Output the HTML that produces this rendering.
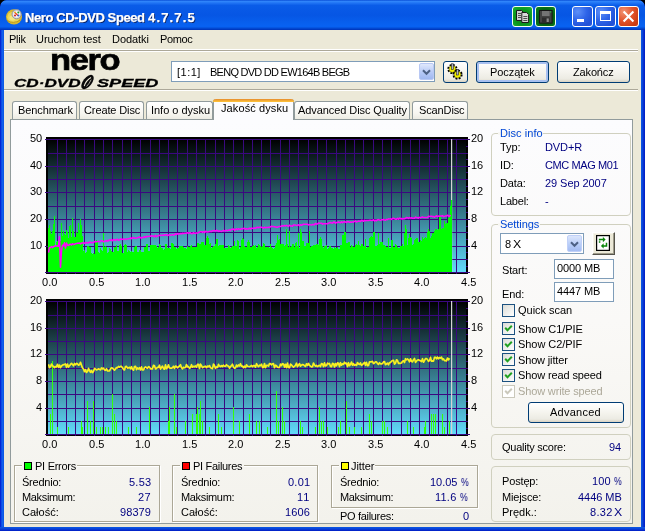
<!DOCTYPE html>
<html><head><meta charset="utf-8"><title>Nero CD-DVD Speed 4.7.7.5</title>
<style>
html,body{margin:0;padding:0;background:#000;}
body{width:645px;height:531px;position:relative;overflow:hidden;font-family:"Liberation Sans",sans-serif;font-size:11px;color:#000;}
.abs,.t,.gb,.btn,.cb,.inp,.tab{position:absolute;box-sizing:border-box;}
.t{white-space:nowrap;line-height:1.25;will-change:transform;}
#win{position:absolute;left:0;top:0;width:645px;height:531px;background:linear-gradient(90deg,#001acc 0,#0836dc 1px,#1464ee 2px,#0a56e2 4px,#0a56e2 641px,#0a50de 642px,#0838d4 643px,#001ac4 645px);border-radius:7px 7px 0 0;overflow:hidden;}
#title{position:absolute;left:0;top:0;width:645px;height:30px;border-radius:7px 7px 0 0;background:linear-gradient(180deg,#0a50d8 0%,#2f84fa 5%,#2074f4 10%,#0a5ce8 18%,#0656e4 50%,#0860ee 78%,#0862f2 88%,#0452dc 93%,#003cc4 97%,#0034b8 100%);}
#client{position:absolute;left:4px;top:30px;width:637px;height:497px;background:#ece9d8;}
.charts{position:absolute;left:0;top:0;}
.sep{position:absolute;left:4px;width:637px;height:2px;border-top:1px solid #aca899;border-bottom:1px solid #fff;box-sizing:border-box;}
#panel{position:absolute;left:10px;top:119px;width:623px;height:405px;border:1px solid #919b9c;background:linear-gradient(180deg,#fcfcfe 0%,#faf9f7 50%,#f3f2ec 100%);box-sizing:border-box;}
.tab{height:18px;top:101px;border:1px solid #919b9c;border-bottom:none;border-radius:3px 3px 0 0;background:linear-gradient(180deg,#ffffff 0%,#f6f5ef 70%,#ecebe2 100%);}
.tab.sel{top:99px;height:21px;background:#fcfcfe;border-top:none;z-index:3;}
.tab.sel:before{content:"";position:absolute;left:-1px;right:-1px;top:0;height:3px;background:linear-gradient(180deg,#e68b2c,#ffc73c);border-radius:3px 3px 0 0;}
.gb{border:1px solid #d0d0bf;border-radius:4px;}
.gl{position:absolute;top:-8px;left:7px;padding:0 2px;background:#f8f8f5;color:#0046d5;white-space:nowrap;line-height:14px;}
.btn{border:1px solid #003c74;border-radius:3px;background:linear-gradient(180deg,#ffffff 0%,#f5f4ee 50%,#ecebe3 85%,#d8d2c2 100%);text-align:center;}
.inp{border:1px solid #7f9db9;background:#fff;}
.cb{width:13px;height:13px;border:1px solid #1c5180;background:linear-gradient(135deg,#dcdcd6,#fff);}
.cb svg{position:absolute;left:1px;top:1px;}
</style></head><body>
<div id="win">
<div id="title"></div>
<div id="client"></div><div class="abs" style="left:0;top:527px;width:645px;height:4px;background:linear-gradient(180deg,#0a56e2 0,#0a50de 1px,#0838d4 2.5px,#001ac4 4px);"></div>
<!-- title bar -->
<svg class="abs" style="left:5px;top:7px" width="19" height="19" viewBox="0 0 19 19"><ellipse cx="9" cy="9.8" rx="8" ry="7.6" fill="#d9b92c"/><ellipse cx="8.5" cy="10.2" rx="6.2" ry="5.6" fill="#ead658"/><ellipse cx="7.5" cy="11" rx="3" ry="2.4" fill="#f2e684"/><path d="M2 13.5Q8 17.5 15.5 13" stroke="#b8961c" stroke-width="1" fill="none"/><circle cx="11.6" cy="7.2" r="4.6" fill="#d6d8de" stroke="#8c8f9c" stroke-width="0.9"/><circle cx="11.6" cy="7.2" r="3.3" fill="#f4f6fa"/><path d="M9.6 5.2L13 8.6" stroke="#e83a18" stroke-width="1.3"/><circle cx="10" cy="8.6" r="1" fill="#d01818"/><circle cx="13.3" cy="5.6" r="1" fill="#18a038"/><circle cx="13.4" cy="8.6" r="1" fill="#2860d8"/><circle cx="10" cy="5.4" r="0.8" fill="#e8b818"/></svg>
<!-- title buttons -->
<div class="abs" style="left:512px;top:6px;width:21px;height:21px;border:1px solid #fff;border-radius:3px;background:radial-gradient(circle at 50% 55%,#0a8218 0%,#0c961e 55%,#1cb432 100%);border-color:#f4fff4;"></div>
<svg class="abs" style="left:515px;top:9px" width="15" height="15" viewBox="0 0 15 15"><path d="M1.5 1.5h5l2 2v8h-7z" fill="#cfcfcf" stroke="#1c1c1c" stroke-width="1"/><path d="M3 4.5h3M3 6.5h3M3 8.5h3" stroke="#505050" stroke-width="1"/><path d="M6.8 3.5h4.8l2 2v8h-6.8z" fill="#d8d8d8" stroke="#1c1c1c" stroke-width="1"/><path d="M8.3 7.5h4M8.3 9.5h4M8.3 11.5h4" stroke="#505050" stroke-width="1"/></svg>
<div class="abs" style="left:535px;top:6px;width:21px;height:21px;border:1px solid #fff;border-radius:3px;background:radial-gradient(circle at 50% 55%,#044c0c 0%,#066012 55%,#0c8c1e 100%);border-color:#f0fff0;"></div>
<svg class="abs" style="left:539px;top:9.5px" width="14" height="14" viewBox="0 0 14 14"><rect x="0.5" y="0.5" width="12.6" height="12.6" fill="#424242" stroke="#161616"/><rect x="3" y="1" width="7.6" height="5" fill="#747474"/><rect x="3" y="7.6" width="7.6" height="5" fill="#2c2c2c"/><rect x="7.6" y="8.4" width="2.2" height="3.6" fill="#8a8a8a"/><rect x="11" y="1.3" width="1.2" height="1.2" fill="#30c040"/></svg>
<div class="abs" style="left:572px;top:6px;width:21px;height:21px;border:1px solid #fff;border-radius:3px;background:radial-gradient(circle at 25% 25%,#5e90f8 0%,#2e64e8 45%,#2050d6 80%,#2a5ce4 100%);"></div>
<div class="abs" style="left:577px;top:19px;width:7px;height:3px;background:#fff;"></div>
<div class="abs" style="left:595px;top:6px;width:21px;height:21px;border:1px solid #fff;border-radius:3px;background:radial-gradient(circle at 25% 25%,#5e90f8 0%,#2e64e8 45%,#2050d6 80%,#2a5ce4 100%);"></div>
<div class="abs" style="left:600px;top:11px;width:11px;height:10px;border:1px solid #fff;border-top:3px solid #fff;"></div>
<div class="abs" style="left:618px;top:6px;width:21px;height:21px;border:1px solid #fff;border-radius:3px;background:radial-gradient(circle at 25% 25%,#f29474 0%,#e2542c 45%,#c83a10 85%,#d2441a 100%);"></div>
<svg class="abs" style="left:622px;top:10px" width="13" height="13" viewBox="0 0 13 13"><path d="M1.6 1.6L11.4 11.4M11.4 1.6L1.6 11.4" stroke="#fff" stroke-width="2.1"/></svg>
<!-- menu -->




<div class="sep" style="top:50px;width:634px"></div><div class="abs" style="left:4px;top:49px;width:634px;height:1px;background:#fff"></div>
<!-- logo -->
<!-- drive combo -->
<div class="inp" style="left:171px;top:61px;width:264px;height:21px;"></div>
<div class="abs" style="left:418.5px;top:63px;width:15px;height:17px;border-radius:2px;background:linear-gradient(180deg,#e0e8fc,#b4c8f6 60%,#a0b8f0);border:1px solid #b8c8f4;"></div>
<svg class="abs" style="left:421.5px;top:68.5px" width="9" height="7" viewBox="0 0 9 7"><path d="M1 1.2L4.5 4.8L8 1.2" stroke="#4d6185" stroke-width="2" fill="none"/></svg>
<!-- icon button -->
<div class="btn" style="left:443px;top:61px;width:25px;height:22px;"></div>
<svg class="abs" style="left:445px;top:61.6px" width="20" height="20" viewBox="0 0 20 20"><g id="gear"><circle cx="7.4" cy="7" r="3.9" fill="none" stroke="#000" stroke-width="2.4" stroke-dasharray="1.75 1.31"/><circle cx="7.4" cy="7" r="3.4" fill="#f2ee00"/><circle cx="7.4" cy="7" r="3.5" fill="none" stroke="#000" stroke-width="0.6" opacity="0.6"/><rect x="6.5" y="1.8" width="1.9" height="5.6" fill="#aeb2c6" stroke="#222" stroke-width="0.6"/></g><g transform="translate(5.1 5.6)"><circle cx="7.4" cy="7" r="3.9" fill="none" stroke="#000" stroke-width="2.4" stroke-dasharray="1.75 1.31"/><circle cx="7.4" cy="7" r="3.4" fill="#f2ee00"/><circle cx="7.4" cy="7" r="3.5" fill="none" stroke="#000" stroke-width="0.6" opacity="0.6"/><rect x="6.5" y="1.8" width="1.9" height="5.6" fill="#aeb2c6" stroke="#222" stroke-width="0.6"/></g></svg>
<div class="btn" style="left:476px;top:61px;width:73px;height:22px;box-shadow:inset 0 0 0 2px #a8c0f0;"></div>

<div class="btn" style="left:557px;top:61px;width:73px;height:22px;"></div>

<div class="sep" style="top:89px;width:634px"></div>
<!-- tabs -->
<div id="panel"></div>
<div class="tab" style="left:12px;width:65px;"></div>
<div class="tab" style="left:79px;width:65px;"></div>
<div class="tab" style="left:146px;width:67px;"></div>
<div class="tab sel" style="left:213px;width:81px;"></div>
<div class="tab" style="left:294px;width:116px;"></div>
<div class="tab" style="left:412px;width:56px;"></div>
<div class="t" style="left:24.77px;top:10px;font-size:13px;color:#fff;letter-spacing:-0.399px;font-weight:bold;text-shadow:1px 1px 0 #0a246a;-webkit-text-stroke:0.25px #fff;">Nero CD-DVD Speed</div>
<div class="t" style="left:147.97px;top:10px;font-size:13px;color:#fff;letter-spacing:1.166px;font-weight:bold;text-shadow:1px 1px 0 #0a246a;-webkit-text-stroke:0.25px #fff;">4.7.7.5</div>
<div class="t" style="left:8.70px;top:33px;font-size:11px;color:#000;letter-spacing:-0.231px;">Plik</div>
<div class="t" style="left:36.00px;top:33px;font-size:11px;color:#000;letter-spacing:-0.059px;">Uruchom test</div>
<div class="t" style="left:112.20px;top:33px;font-size:11px;color:#000;letter-spacing:-0.056px;">Dodatki</div>
<div class="t" style="left:159.60px;top:33px;font-size:11px;color:#000;letter-spacing:-0.367px;">Pomoc</div>
<div class="t" style="left:177.20px;top:66px;font-size:11px;color:#000;letter-spacing:0.499px;">[1:1]</div>
<div class="t" style="left:210.20px;top:66px;font-size:11px;color:#000;letter-spacing:-0.743px;">BENQ DVD DD EW164B BEGB</div>
<div class="t" style="left:489.70px;top:66px;font-size:11px;color:#000;letter-spacing:-0.068px;">Początek</div>
<div class="t" style="left:572.70px;top:66px;font-size:11px;color:#000;letter-spacing:-0.153px;">Zakończ</div>
<div class="t" style="left:17.60px;top:104px;font-size:11px;color:#000;letter-spacing:-0.092px;">Benchmark</div>
<div class="t" style="left:83.60px;top:104px;font-size:11px;color:#000;letter-spacing:-0.114px;">Create Disc</div>
<div class="t" style="left:150.80px;top:104px;font-size:11px;color:#000;letter-spacing:-0.026px;">Info o dysku</div>
<div class="t" style="left:220.50px;top:102px;font-size:11px;color:#000;letter-spacing:0.098px;z-index:4;">Jakość dysku</div>
<div class="t" style="left:298.20px;top:104px;font-size:11px;color:#000;letter-spacing:-0.079px;">Advanced Disc Quality</div>
<div class="t" style="left:418.70px;top:104px;font-size:11px;color:#000;letter-spacing:-0.120px;">ScanDisc</div>
<div class="t" style="left:49.6px;top:44.8px;font-size:29.5px;line-height:1;font-weight:bold;-webkit-text-stroke:0.7px #000;letter-spacing:-1.2px;transform-origin:0 0;transform:scaleX(1.169);">nero</div>
<div class="t" style="left:13.9px;top:77.6px;font-size:11.2px;line-height:1;font-weight:bold;font-style:italic;-webkit-text-stroke:0.3px #000;letter-spacing:0.0px;transform-origin:0 0;transform:scaleX(1.529);">CD·DVD</div>
<div class="t" style="left:97.4px;top:77.6px;font-size:11.2px;line-height:1;font-weight:bold;font-style:italic;-webkit-text-stroke:0.3px #000;letter-spacing:0.0px;transform-origin:0 0;transform:scaleX(1.617);">SPEED</div>
<svg class="abs" style="left:79px;top:74px" width="17" height="16" viewBox="0 0 17 16"><ellipse cx="8.5" cy="8" rx="4.3" ry="8.4" transform="rotate(38 8.5 8)" fill="#0a0a0a"/><path d="M5.2 12.2Q7 6.5 12 3.6" stroke="#ece9d8" stroke-width="1.1" fill="none"/><path d="M7.6 12.4Q10.5 9.5 12.2 5.6" stroke="#ece9d8" stroke-width="0.7" fill="none"/></svg>
<svg class="charts" width="645" height="531" viewBox="0 0 645 531" shape-rendering="crispEdges">
<defs><linearGradient id="bg" x1="0" y1="0" x2="0" y2="1"><stop offset="0" stop-color="#000000"/><stop offset="1" stop-color="#62dcfc"/></linearGradient></defs>
<rect x="48" y="139" width="418" height="134" fill="url(#bg)"/>
<rect x="57" y="139" width="1" height="134" fill="#3a0880"/><rect x="66" y="139" width="1" height="134" fill="#3a0880"/><rect x="75" y="139" width="1" height="134" fill="#3a0880"/><rect x="84" y="139" width="1" height="134" fill="#3a0880"/><rect x="94" y="139" width="1" height="134" fill="#3a0880"/><rect x="103" y="139" width="1" height="134" fill="#3a0880"/><rect x="112" y="139" width="1" height="134" fill="#3a0880"/><rect x="122" y="139" width="1" height="134" fill="#3a0880"/><rect x="131" y="139" width="1" height="134" fill="#3a0880"/><rect x="140" y="139" width="1" height="134" fill="#3a0880"/><rect x="150" y="139" width="1" height="134" fill="#3a0880"/><rect x="159" y="139" width="1" height="134" fill="#3a0880"/><rect x="168" y="139" width="1" height="134" fill="#3a0880"/><rect x="177" y="139" width="1" height="134" fill="#3a0880"/><rect x="187" y="139" width="1" height="134" fill="#3a0880"/><rect x="196" y="139" width="1" height="134" fill="#3a0880"/><rect x="205" y="139" width="1" height="134" fill="#3a0880"/><rect x="215" y="139" width="1" height="134" fill="#3a0880"/><rect x="224" y="139" width="1" height="134" fill="#3a0880"/><rect x="233" y="139" width="1" height="134" fill="#3a0880"/><rect x="243" y="139" width="1" height="134" fill="#3a0880"/><rect x="252" y="139" width="1" height="134" fill="#3a0880"/><rect x="261" y="139" width="1" height="134" fill="#3a0880"/><rect x="270" y="139" width="1" height="134" fill="#3a0880"/><rect x="280" y="139" width="1" height="134" fill="#3a0880"/><rect x="289" y="139" width="1" height="134" fill="#3a0880"/><rect x="298" y="139" width="1" height="134" fill="#3a0880"/><rect x="308" y="139" width="1" height="134" fill="#3a0880"/><rect x="317" y="139" width="1" height="134" fill="#3a0880"/><rect x="326" y="139" width="1" height="134" fill="#3a0880"/><rect x="336" y="139" width="1" height="134" fill="#3a0880"/><rect x="345" y="139" width="1" height="134" fill="#3a0880"/><rect x="354" y="139" width="1" height="134" fill="#3a0880"/><rect x="363" y="139" width="1" height="134" fill="#3a0880"/><rect x="373" y="139" width="1" height="134" fill="#3a0880"/><rect x="382" y="139" width="1" height="134" fill="#3a0880"/><rect x="391" y="139" width="1" height="134" fill="#3a0880"/><rect x="401" y="139" width="1" height="134" fill="#3a0880"/><rect x="410" y="139" width="1" height="134" fill="#3a0880"/><rect x="419" y="139" width="1" height="134" fill="#3a0880"/><rect x="429" y="139" width="1" height="134" fill="#3a0880"/><rect x="438" y="139" width="1" height="134" fill="#3a0880"/><rect x="447" y="139" width="1" height="134" fill="#3a0880"/><rect x="456" y="139" width="1" height="134" fill="#3a0880"/><rect x="48" y="139" width="418" height="1" fill="#3a0880"/><rect x="48" y="153" width="418" height="1" fill="#3a0880"/><rect x="48" y="166" width="418" height="1" fill="#3a0880"/><rect x="48" y="179" width="418" height="1" fill="#3a0880"/><rect x="48" y="192" width="418" height="1" fill="#3a0880"/><rect x="48" y="206" width="418" height="1" fill="#3a0880"/><rect x="48" y="219" width="418" height="1" fill="#3a0880"/><rect x="48" y="232" width="418" height="1" fill="#3a0880"/><rect x="48" y="246" width="418" height="1" fill="#3a0880"/><rect x="48" y="259" width="418" height="1" fill="#3a0880"/><rect x="48" y="272" width="418" height="1" fill="#3a0880"/>
<rect x="451" y="139" width="1" height="133" fill="#d4d4d4"/><rect x="452" y="139" width="1" height="133" fill="#dcdcdc" opacity="0.2"/>
<path d="M48 272V227.9h1V224.6h1V230.7h1V234.4h1V231.1h1V224.2h1V215.9h1V245.9h1V241.7h1V241.0h1V240.9h1V243.8h1V240.9h1V222.6h1V236.4h1V231.2h1V234.4h1V234.8h1V229.6h1V232.1h1V237.5h1V225.8h1V225.4h1V236.6h1V218.4h1V230.7h1V236.6h1V237.2h1V231.5h1V232.7h1V223.4h1V230.4h1V219.4h1V225.3h1V235.7h1V250.6h1V250.4h1V252.5h1V252.0h1V246.1h1V246.4h1V247.1h1V246.6h1V253.4h1V253.9h1V253.2h1V254.0h1V241.0h1V239.7h1V240.9h1V252.4h1V252.8h1V247.6h1V250.1h1V251.0h1V232.6h1V246.7h1V245.8h1V247.3h1V252.7h1V251.8h1V248.1h1V248.9h1V251.4h1V251.6h1V252.1h1V247.1h1V246.6h1V244.5h1V250.5h1V251.0h1V244.9h1V244.3h1V245.6h1V252.9h1V253.0h1V245.1h1V243.9h1V245.1h1V251.8h1V249.8h1V251.1h1V251.5h1V251.3h1V252.1h1V252.1h1V247.2h1V246.1h1V246.3h1V251.9h1V251.9h1V249.6h1V249.5h1V252.2h1V251.9h1V252.2h1V246.6h1V247.4h1V243.6h1V243.7h1V251.1h1V251.3h1V244.8h1V244.7h1V244.6h1V245.3h1V245.1h1V245.4h1V245.7h1V247.7h1V247.4h1V244.4h1V244.6h1V248.0h1V248.1h1V249.6h1V249.1h1V244.1h1V243.8h1V248.1h1V247.7h1V248.2h1V248.9h1V243.4h1V242.8h1V243.7h1V246.6h1V246.5h1V248.6h1V248.2h1V248.0h1V245.7h1V246.0h1V246.4h1V245.8h1V246.8h1V247.7h1V248.4h1V248.5h1V246.0h1V247.3h1V246.7h1V245.7h1V245.3h1V246.8h1V247.1h1V247.2h1V247.1h1V247.3h1V243.3h1V243.3h1V243.5h1V243.8h1V242.2h1V241.9h1V241.8h1V244.8h1V245.4h1V237.7h1V235.9h1V237.6h1V243.6h1V243.1h1V247.6h1V246.5h1V245.5h1V245.9h1V244.3h1V239.2h1V238.7h1V245.6h1V245.0h1V244.6h1V244.8h1V244.8h1V245.1h1V247.9h1V247.5h1V247.7h1V248.2h1V245.3h1V245.9h1V248.4h1V246.8h1V245.9h1V245.8h1V240.8h1V245.8h1V245.8h1V239.7h1V240.5h1V248.7h1V246.6h1V239.6h1V237.8h1V238.8h1V246.3h1V246.6h1V247.1h1V241.9h1V240.1h1V242.1h1V246.7h1V246.6h1V246.4h1V245.2h1V245.8h1V244.9h1V247.5h1V247.2h1V244.0h1V244.7h1V246.2h1V246.6h1V246.1h1V243.4h1V244.0h1V246.9h1V247.2h1V246.7h1V247.4h1V248.3h1V244.4h1V247.1h1V247.9h1V248.6h1V247.6h1V244.8h1V242.8h1V234.7h1V239.6h1V238.9h1V244.0h1V243.8h1V244.3h1V243.9h1V246.4h1V245.4h1V229.4h1V244.1h1V247.1h1V230.8h1V247.4h1V245.7h1V243.8h1V243.8h1V246.8h1V242.9h1V242.4h1V246.1h1V233.4h1V248.1h1V228.6h1V231.9h1V240.7h1V240.8h1V245.9h1V246.3h1V243.0h1V242.5h1V243.0h1V230.9h1V246.6h1V246.3h1V246.0h1V245.4h1V245.1h1V245.4h1V243.6h1V243.9h1V245.4h1V239.2h1V236.8h1V238.6h1V246.4h1V247.5h1V245.7h1V245.8h1V245.1h1V248.5h1V247.9h1V245.7h1V245.5h1V248.3h1V248.0h1V248.6h1V247.2h1V248.1h1V248.2h1V247.3h1V248.6h1V248.8h1V245.3h1V244.8h1V235.1h1V235.1h1V232.2h1V231.6h1V243.2h1V242.5h1V242.4h1V241.8h1V247.0h1V245.0h1V246.1h1V247.4h1V246.6h1V244.9h1V244.2h1V244.8h1V240.8h1V245.3h1V246.1h1V244.1h1V244.4h1V246.1h1V245.5h1V238.9h1V247.5h1V247.0h1V247.2h1V238.4h1V237.3h1V235.5h1V236.5h1V232.0h1V231.5h1V245.8h1V245.5h1V245.1h1V233.0h1V244.1h1V242.3h1V242.2h1V242.3h1V245.1h1V245.3h1V246.4h1V246.5h1V246.9h1V237.5h1V248.1h1V248.3h1V239.7h1V239.6h1V246.8h1V247.0h1V244.0h1V244.5h1V247.0h1V247.8h1V248.0h1V246.1h1V245.8h1V243.6h1V246.2h1V233.4h1V225.4h1V229.4h1V245.4h1V238.3h1V234.2h1V237.4h1V237.5h1V244.9h1V244.2h1V240.0h1V239.4h1V237.9h1V238.4h1V242.4h1V241.9h1V240.3h1V240.5h1V236.5h1V238.5h1V238.2h1V236.9h1V238.0h1V231.5h1V229.2h1V230.6h1V237.7h1V236.1h1V233.2h1V233.0h1V230.6h1V229.1h1V229.1h1V229.9h1V229.4h1V216.9h1V217.4h1V229.0h1V228.2h1V228.1h1V220.6h1V224.2h1V223.3h1V222.9h1V217.5h1V216.1h1V205.5h1V200.2h1V272Z" fill="#00ff00"/>
<g shape-rendering="auto"><polyline points="48.5,252.7 49.5,247.7 50.5,247.5 51.5,246.5 52.5,247.6 53.5,246.7 54.5,246.3 55.5,245.8 56.5,245.9 57.5,245.9 58.5,246.2 59.5,236.8 60.5,267.3 61.5,250.7 62.5,245.2 63.5,245.9 64.5,242.8 65.5,247.9 66.5,243.1 67.5,245.3 68.5,245.4 69.5,244.5 70.5,244.2 71.5,245.0 72.5,243.7 73.5,244.5 74.5,244.3 75.5,243.7 76.5,243.6 77.5,243.2 78.5,243.2 79.5,243.0 80.5,243.9 81.5,243.1 82.5,243.0 83.5,242.7 84.5,243.4 85.5,242.9 86.5,242.6 87.5,242.7 88.5,242.9 89.5,242.1 90.5,242.2 91.5,242.9 92.5,242.4 93.5,242.6 94.5,241.5 95.5,241.8 96.5,241.7 97.5,241.6 98.5,241.4 99.5,241.4 100.5,241.5 101.5,240.7 102.5,240.7 103.5,241.7 104.5,241.5 105.5,240.9 106.5,240.5 107.5,241.3 108.5,240.4 109.5,240.1 110.5,240.3 111.5,239.6 112.5,240.8 113.5,239.8 114.5,239.6 115.5,240.4 116.5,239.5 117.5,239.2 118.5,240.2 119.5,240.0 120.5,238.8 121.5,239.4 122.5,239.2 123.5,239.0 124.5,239.3 125.5,239.5 126.5,238.9 127.5,239.0 128.5,238.8 129.5,238.5 130.5,238.0 131.5,238.6 132.5,237.7 133.5,237.5 134.5,238.2 135.5,238.2 136.5,238.2 137.5,237.6 138.5,237.5 139.5,237.0 140.5,237.7 141.5,238.1 142.5,237.5 143.5,237.4 144.5,236.7 145.5,237.4 146.5,236.4 147.5,236.5 148.5,236.5 149.5,236.3 150.5,236.3 151.5,235.8 152.5,235.9 153.5,236.3 154.5,236.8 155.5,235.4 156.5,236.7 157.5,236.1 158.5,235.6 159.5,235.3 160.5,235.4 161.5,235.2 162.5,235.2 163.5,235.4 164.5,234.7 165.5,235.1 166.5,234.5 167.5,235.6 168.5,235.2 169.5,234.5 170.5,235.3 171.5,235.1 172.5,234.6 173.5,235.2 174.5,234.7 175.5,233.8 176.5,234.5 177.5,233.7 178.5,234.1 179.5,233.9 180.5,233.5 181.5,233.7 182.5,233.3 183.5,233.4 184.5,233.2 185.5,233.3 186.5,233.1 187.5,232.8 188.5,233.3 189.5,232.7 190.5,232.8 191.5,233.7 192.5,233.4 193.5,232.6 194.5,233.3 195.5,233.2 196.5,232.9 197.5,232.9 198.5,232.7 199.5,232.0 200.5,231.8 201.5,231.7 202.5,232.5 203.5,231.7 204.5,232.4 205.5,231.2 206.5,231.7 207.5,232.0 208.5,231.8 209.5,231.5 210.5,231.3 211.5,231.5 212.5,230.8 213.5,230.6 214.5,230.7 215.5,231.1 216.5,230.3 217.5,230.7 218.5,231.4 219.5,231.0 220.5,231.3 221.5,231.4 222.5,230.9 223.5,230.3 224.5,231.0 225.5,230.7 226.5,230.2 227.5,230.8 228.5,230.2 229.5,229.9 230.5,230.6 231.5,229.2 232.5,229.3 233.5,229.0 234.5,230.4 235.5,229.6 236.5,228.8 237.5,229.6 238.5,228.8 239.5,229.2 240.5,229.6 241.5,228.5 242.5,228.9 243.5,228.5 244.5,228.3 245.5,229.2 246.5,228.7 247.5,229.0 248.5,229.0 249.5,228.2 250.5,229.1 251.5,228.0 252.5,228.3 253.5,228.5 254.5,228.0 255.5,228.4 256.5,227.5 257.5,227.3 258.5,227.8 259.5,227.3 260.5,227.2 261.5,227.2 262.5,227.6 263.5,228.1 264.5,227.3 265.5,227.8 266.5,227.5 267.5,227.5 268.5,227.3 269.5,227.5 270.5,226.7 271.5,226.3 272.5,226.4 273.5,226.5 274.5,226.7 275.5,226.9 276.5,227.3 277.5,227.2 278.5,226.8 279.5,226.6 280.5,226.5 281.5,226.1 282.5,225.8 283.5,225.9 284.5,225.6 285.5,225.9 286.5,225.4 287.5,225.9 288.5,226.4 289.5,225.1 290.5,226.0 291.5,226.0 292.5,226.2 293.5,224.9 294.5,225.0 295.5,225.1 296.5,225.6 297.5,225.2 298.5,224.7 299.5,225.7 300.5,224.7 301.5,225.3 302.5,224.8 303.5,224.3 304.5,224.2 305.5,224.3 306.5,224.3 307.5,224.2 308.5,225.0 309.5,224.6 310.5,224.8 311.5,224.9 312.5,224.6 313.5,224.6 314.5,224.7 315.5,223.3 316.5,224.1 317.5,224.0 318.5,223.1 319.5,223.3 320.5,223.3 321.5,223.2 322.5,224.1 323.5,223.8 324.5,223.8 325.5,223.7 326.5,223.7 327.5,223.7 328.5,223.3 329.5,222.8 330.5,222.6 331.5,222.9 332.5,223.1 333.5,222.1 334.5,222.1 335.5,223.2 336.5,222.5 337.5,222.5 338.5,221.9 339.5,222.6 340.5,222.8 341.5,221.8 342.5,222.7 343.5,221.9 344.5,221.7 345.5,222.0 346.5,222.5 347.5,221.5 348.5,221.7 349.5,222.2 350.5,221.9 351.5,222.3 352.5,221.9 353.5,222.1 354.5,221.2 355.5,221.1 356.5,221.9 357.5,221.6 358.5,221.1 359.5,221.2 360.5,221.4 361.5,220.3 362.5,220.6 363.5,221.3 364.5,220.3 365.5,220.7 366.5,220.6 367.5,220.5 368.5,220.4 369.5,220.3 370.5,220.2 371.5,220.4 372.5,220.2 373.5,219.9 374.5,220.9 375.5,220.3 376.5,220.7 377.5,219.8 378.5,219.6 379.5,220.0 380.5,220.4 381.5,219.8 382.5,219.7 383.5,219.4 384.5,220.1 385.5,220.2 386.5,219.4 387.5,219.6 388.5,218.9 389.5,219.1 390.5,218.9 391.5,219.4 392.5,218.6 393.5,218.3 394.5,218.7 395.5,219.3 396.5,219.2 397.5,218.3 398.5,219.1 399.5,218.1 400.5,218.8 401.5,218.5 402.5,219.0 403.5,218.7 404.5,218.7 405.5,218.3 406.5,217.6 407.5,217.7 408.5,218.4 409.5,217.6 410.5,218.1 411.5,217.7 412.5,218.2 413.5,218.3 414.5,218.2 415.5,217.1 416.5,217.5 417.5,217.7 418.5,218.2 419.5,217.4 420.5,217.9 421.5,217.3 422.5,217.0 423.5,217.4 424.5,217.5 425.5,217.6 426.5,217.5 427.5,217.6 428.5,216.2 429.5,216.4 430.5,216.3 431.5,216.3 432.5,216.6 433.5,216.6 434.5,217.2 435.5,216.4 436.5,215.8 437.5,216.6 438.5,216.1 439.5,216.2 440.5,216.1 441.5,215.9 442.5,215.7 443.5,216.6 444.5,216.4 445.5,216.0 446.5,216.0 447.5,215.2 448.5,216.1 449.5,216.4 450.5,215.0" fill="none" stroke="#ff04fa" stroke-width="1.55" stroke-linejoin="round"/></g>
<rect x="46" y="137" width="2" height="137" fill="#000"/><rect x="466" y="137" width="2" height="137" fill="#000"/><rect x="47" y="137" width="420" height="2" fill="#000"/><rect x="46" y="273" width="422" height="1" fill="#000"/><rect x="466" y="139" width="4" height="1" fill="#3a0880"/><rect x="466" y="146" width="2" height="1" fill="#3a0880"/><rect x="466" y="153" width="2" height="1" fill="#3a0880"/><rect x="466" y="159" width="2" height="1" fill="#3a0880"/><rect x="466" y="166" width="4" height="1" fill="#3a0880"/><rect x="466" y="172" width="2" height="1" fill="#3a0880"/><rect x="466" y="179" width="2" height="1" fill="#3a0880"/><rect x="466" y="186" width="2" height="1" fill="#3a0880"/><rect x="466" y="192" width="4" height="1" fill="#3a0880"/><rect x="466" y="199" width="2" height="1" fill="#3a0880"/><rect x="466" y="206" width="2" height="1" fill="#3a0880"/><rect x="466" y="212" width="2" height="1" fill="#3a0880"/><rect x="466" y="219" width="4" height="1" fill="#3a0880"/><rect x="466" y="226" width="2" height="1" fill="#3a0880"/><rect x="466" y="232" width="2" height="1" fill="#3a0880"/><rect x="466" y="239" width="2" height="1" fill="#3a0880"/><rect x="466" y="246" width="4" height="1" fill="#3a0880"/><rect x="466" y="252" width="2" height="1" fill="#3a0880"/><rect x="466" y="259" width="2" height="1" fill="#3a0880"/><rect x="466" y="266" width="2" height="1" fill="#3a0880"/><rect x="466" y="272" width="4" height="1" fill="#3a0880"/><rect x="45" y="139" width="3" height="1" fill="#3a0880"/><rect x="45" y="166" width="3" height="1" fill="#3a0880"/><rect x="45" y="192" width="3" height="1" fill="#3a0880"/><rect x="45" y="219" width="3" height="1" fill="#3a0880"/><rect x="45" y="246" width="3" height="1" fill="#3a0880"/><rect x="45" y="272" width="3" height="1" fill="#3a0880"/><rect x="57" y="273" width="1" height="1" fill="#3a0880"/><rect x="66" y="273" width="1" height="1" fill="#3a0880"/><rect x="75" y="273" width="1" height="1" fill="#3a0880"/><rect x="84" y="273" width="1" height="1" fill="#3a0880"/><rect x="94" y="273" width="1" height="1" fill="#3a0880"/><rect x="103" y="273" width="1" height="1" fill="#3a0880"/><rect x="112" y="273" width="1" height="1" fill="#3a0880"/><rect x="122" y="273" width="1" height="1" fill="#3a0880"/><rect x="131" y="273" width="1" height="1" fill="#3a0880"/><rect x="140" y="273" width="1" height="1" fill="#3a0880"/><rect x="150" y="273" width="1" height="1" fill="#3a0880"/><rect x="159" y="273" width="1" height="1" fill="#3a0880"/><rect x="168" y="273" width="1" height="1" fill="#3a0880"/><rect x="177" y="273" width="1" height="1" fill="#3a0880"/><rect x="187" y="273" width="1" height="1" fill="#3a0880"/><rect x="196" y="273" width="1" height="1" fill="#3a0880"/><rect x="205" y="273" width="1" height="1" fill="#3a0880"/><rect x="215" y="273" width="1" height="1" fill="#3a0880"/><rect x="224" y="273" width="1" height="1" fill="#3a0880"/><rect x="233" y="273" width="1" height="1" fill="#3a0880"/><rect x="243" y="273" width="1" height="1" fill="#3a0880"/><rect x="252" y="273" width="1" height="1" fill="#3a0880"/><rect x="261" y="273" width="1" height="1" fill="#3a0880"/><rect x="270" y="273" width="1" height="1" fill="#3a0880"/><rect x="280" y="273" width="1" height="1" fill="#3a0880"/><rect x="289" y="273" width="1" height="1" fill="#3a0880"/><rect x="298" y="273" width="1" height="1" fill="#3a0880"/><rect x="308" y="273" width="1" height="1" fill="#3a0880"/><rect x="317" y="273" width="1" height="1" fill="#3a0880"/><rect x="326" y="273" width="1" height="1" fill="#3a0880"/><rect x="336" y="273" width="1" height="1" fill="#3a0880"/><rect x="345" y="273" width="1" height="1" fill="#3a0880"/><rect x="354" y="273" width="1" height="1" fill="#3a0880"/><rect x="363" y="273" width="1" height="1" fill="#3a0880"/><rect x="373" y="273" width="1" height="1" fill="#3a0880"/><rect x="382" y="273" width="1" height="1" fill="#3a0880"/><rect x="391" y="273" width="1" height="1" fill="#3a0880"/><rect x="401" y="273" width="1" height="1" fill="#3a0880"/><rect x="410" y="273" width="1" height="1" fill="#3a0880"/><rect x="419" y="273" width="1" height="1" fill="#3a0880"/><rect x="429" y="273" width="1" height="1" fill="#3a0880"/><rect x="438" y="273" width="1" height="1" fill="#3a0880"/><rect x="447" y="273" width="1" height="1" fill="#3a0880"/><rect x="456" y="273" width="1" height="1" fill="#3a0880"/>
<rect x="48" y="301" width="418" height="134" fill="url(#bg)"/>
<rect x="57" y="301" width="1" height="134" fill="#3a0880"/><rect x="66" y="301" width="1" height="134" fill="#3a0880"/><rect x="75" y="301" width="1" height="134" fill="#3a0880"/><rect x="84" y="301" width="1" height="134" fill="#3a0880"/><rect x="94" y="301" width="1" height="134" fill="#3a0880"/><rect x="103" y="301" width="1" height="134" fill="#3a0880"/><rect x="112" y="301" width="1" height="134" fill="#3a0880"/><rect x="122" y="301" width="1" height="134" fill="#3a0880"/><rect x="131" y="301" width="1" height="134" fill="#3a0880"/><rect x="140" y="301" width="1" height="134" fill="#3a0880"/><rect x="150" y="301" width="1" height="134" fill="#3a0880"/><rect x="159" y="301" width="1" height="134" fill="#3a0880"/><rect x="168" y="301" width="1" height="134" fill="#3a0880"/><rect x="177" y="301" width="1" height="134" fill="#3a0880"/><rect x="187" y="301" width="1" height="134" fill="#3a0880"/><rect x="196" y="301" width="1" height="134" fill="#3a0880"/><rect x="205" y="301" width="1" height="134" fill="#3a0880"/><rect x="215" y="301" width="1" height="134" fill="#3a0880"/><rect x="224" y="301" width="1" height="134" fill="#3a0880"/><rect x="233" y="301" width="1" height="134" fill="#3a0880"/><rect x="243" y="301" width="1" height="134" fill="#3a0880"/><rect x="252" y="301" width="1" height="134" fill="#3a0880"/><rect x="261" y="301" width="1" height="134" fill="#3a0880"/><rect x="270" y="301" width="1" height="134" fill="#3a0880"/><rect x="280" y="301" width="1" height="134" fill="#3a0880"/><rect x="289" y="301" width="1" height="134" fill="#3a0880"/><rect x="298" y="301" width="1" height="134" fill="#3a0880"/><rect x="308" y="301" width="1" height="134" fill="#3a0880"/><rect x="317" y="301" width="1" height="134" fill="#3a0880"/><rect x="326" y="301" width="1" height="134" fill="#3a0880"/><rect x="336" y="301" width="1" height="134" fill="#3a0880"/><rect x="345" y="301" width="1" height="134" fill="#3a0880"/><rect x="354" y="301" width="1" height="134" fill="#3a0880"/><rect x="363" y="301" width="1" height="134" fill="#3a0880"/><rect x="373" y="301" width="1" height="134" fill="#3a0880"/><rect x="382" y="301" width="1" height="134" fill="#3a0880"/><rect x="391" y="301" width="1" height="134" fill="#3a0880"/><rect x="401" y="301" width="1" height="134" fill="#3a0880"/><rect x="410" y="301" width="1" height="134" fill="#3a0880"/><rect x="419" y="301" width="1" height="134" fill="#3a0880"/><rect x="429" y="301" width="1" height="134" fill="#3a0880"/><rect x="438" y="301" width="1" height="134" fill="#3a0880"/><rect x="447" y="301" width="1" height="134" fill="#3a0880"/><rect x="456" y="301" width="1" height="134" fill="#3a0880"/><rect x="48" y="301" width="418" height="1" fill="#3a0880"/><rect x="48" y="315" width="418" height="1" fill="#3a0880"/><rect x="48" y="328" width="418" height="1" fill="#3a0880"/><rect x="48" y="341" width="418" height="1" fill="#3a0880"/><rect x="48" y="354" width="418" height="1" fill="#3a0880"/><rect x="48" y="368" width="418" height="1" fill="#3a0880"/><rect x="48" y="381" width="418" height="1" fill="#3a0880"/><rect x="48" y="394" width="418" height="1" fill="#3a0880"/><rect x="48" y="408" width="418" height="1" fill="#3a0880"/><rect x="48" y="421" width="418" height="1" fill="#3a0880"/><rect x="48" y="434" width="418" height="1" fill="#3a0880"/>
<rect x="50" y="414.1" width="1" height="20.0" fill="#34ff08"/><rect x="52" y="360.9" width="1" height="73.2" fill="#34ff08"/><rect x="57" y="427.4" width="1" height="6.7" fill="#34ff08"/><rect x="68" y="427.4" width="1" height="6.7" fill="#34ff08"/><rect x="81" y="420.7" width="1" height="13.3" fill="#34ff08"/><rect x="82" y="427.4" width="1" height="6.7" fill="#34ff08"/><rect x="87" y="400.8" width="1" height="33.2" fill="#34ff08"/><rect x="90" y="420.7" width="1" height="13.3" fill="#34ff08"/><rect x="93" y="400.8" width="1" height="33.2" fill="#34ff08"/><rect x="96" y="427.4" width="1" height="6.7" fill="#34ff08"/><rect x="100" y="427.4" width="1" height="6.7" fill="#34ff08"/><rect x="102" y="427.4" width="1" height="6.7" fill="#34ff08"/><rect x="105" y="427.4" width="1" height="6.7" fill="#34ff08"/><rect x="108" y="427.4" width="1" height="6.7" fill="#34ff08"/><rect x="112" y="394.1" width="1" height="39.9" fill="#34ff08"/><rect x="114" y="414.1" width="1" height="20.0" fill="#34ff08"/><rect x="116" y="420.7" width="1" height="13.3" fill="#34ff08"/><rect x="128" y="427.4" width="1" height="6.7" fill="#34ff08"/><rect x="136" y="427.4" width="1" height="6.7" fill="#34ff08"/><rect x="149" y="407.4" width="1" height="26.6" fill="#34ff08"/><rect x="168" y="420.7" width="1" height="13.3" fill="#34ff08"/><rect x="169" y="407.4" width="1" height="26.6" fill="#34ff08"/><rect x="174" y="394.1" width="1" height="39.9" fill="#34ff08"/><rect x="176" y="427.4" width="1" height="6.7" fill="#34ff08"/><rect x="185" y="420.7" width="1" height="13.3" fill="#34ff08"/><rect x="192" y="414.1" width="1" height="20.0" fill="#34ff08"/><rect x="196" y="414.1" width="1" height="20.0" fill="#34ff08"/><rect x="197" y="407.4" width="1" height="26.6" fill="#34ff08"/><rect x="199" y="414.1" width="1" height="20.0" fill="#34ff08"/><rect x="200" y="400.8" width="1" height="33.2" fill="#34ff08"/><rect x="202" y="420.7" width="1" height="13.3" fill="#34ff08"/><rect x="209" y="427.4" width="1" height="6.7" fill="#34ff08"/><rect x="218" y="414.1" width="1" height="20.0" fill="#34ff08"/><rect x="221" y="427.4" width="1" height="6.7" fill="#34ff08"/><rect x="233" y="407.4" width="1" height="26.6" fill="#34ff08"/><rect x="239" y="420.7" width="1" height="13.3" fill="#34ff08"/><rect x="249" y="414.1" width="1" height="20.0" fill="#34ff08"/><rect x="249" y="414.1" width="1" height="20.0" fill="#34ff08"/><rect x="256" y="420.7" width="1" height="13.3" fill="#34ff08"/><rect x="259" y="420.7" width="1" height="13.3" fill="#34ff08"/><rect x="267" y="427.4" width="1" height="6.7" fill="#34ff08"/><rect x="276" y="390.8" width="1" height="43.2" fill="#34ff08"/><rect x="278" y="420.7" width="1" height="13.3" fill="#34ff08"/><rect x="282" y="407.4" width="1" height="26.6" fill="#34ff08"/><rect x="284" y="420.7" width="1" height="13.3" fill="#34ff08"/><rect x="300" y="420.7" width="1" height="13.3" fill="#34ff08"/><rect x="302" y="427.4" width="1" height="6.7" fill="#34ff08"/><rect x="315" y="427.4" width="1" height="6.7" fill="#34ff08"/><rect x="319" y="407.4" width="1" height="26.6" fill="#34ff08"/><rect x="321" y="420.7" width="1" height="13.3" fill="#34ff08"/><rect x="323" y="420.7" width="1" height="13.3" fill="#34ff08"/><rect x="327" y="427.4" width="1" height="6.7" fill="#34ff08"/><rect x="338" y="427.4" width="1" height="6.7" fill="#34ff08"/><rect x="340" y="420.7" width="1" height="13.3" fill="#34ff08"/><rect x="346" y="400.8" width="1" height="33.2" fill="#34ff08"/><rect x="349" y="427.4" width="1" height="6.7" fill="#34ff08"/><rect x="354" y="427.4" width="1" height="6.7" fill="#34ff08"/><rect x="361" y="427.4" width="1" height="6.7" fill="#34ff08"/><rect x="369" y="414.1" width="1" height="20.0" fill="#34ff08"/><rect x="371" y="420.7" width="1" height="13.3" fill="#34ff08"/><rect x="382" y="420.7" width="1" height="13.3" fill="#34ff08"/><rect x="384" y="420.7" width="1" height="13.3" fill="#34ff08"/><rect x="387" y="427.4" width="1" height="6.7" fill="#34ff08"/><rect x="407" y="420.7" width="1" height="13.3" fill="#34ff08"/><rect x="413" y="427.4" width="1" height="6.7" fill="#34ff08"/><rect x="424" y="427.4" width="1" height="6.7" fill="#34ff08"/><rect x="425" y="420.7" width="1" height="13.3" fill="#34ff08"/><rect x="431" y="414.1" width="1" height="20.0" fill="#34ff08"/><rect x="433" y="414.1" width="1" height="20.0" fill="#34ff08"/><rect x="435" y="414.1" width="1" height="20.0" fill="#34ff08"/><rect x="442" y="414.1" width="1" height="20.0" fill="#34ff08"/><rect x="444" y="427.4" width="1" height="6.7" fill="#34ff08"/><rect x="449" y="420.7" width="1" height="13.3" fill="#34ff08"/>
<rect x="451" y="301" width="1" height="133" fill="#d4d4d4"/><rect x="452" y="301" width="1" height="133" fill="#dcdcdc" opacity="0.2"/>
<g shape-rendering="auto"><polyline points="48.5,364.3 49.5,367.7 50.5,366.7 51.5,364.1 52.5,365.8 53.5,366.4 54.5,367.6 55.5,366.7 56.5,366.9 57.5,364.3 58.5,367.3 59.5,365.1 60.5,367.6 61.5,366.0 62.5,365.1 63.5,364.7 64.5,364.6 65.5,364.0 66.5,367.3 67.5,364.1 68.5,367.1 69.5,365.8 70.5,364.4 71.5,363.3 72.5,364.5 73.5,365.8 74.5,363.5 75.5,364.8 76.5,363.4 77.5,363.8 78.5,365.2 79.5,364.8 80.5,362.3 81.5,365.2 82.5,368.0 83.5,369.0 84.5,371.6 85.5,369.6 86.5,372.5 87.5,371.5 88.5,368.4 89.5,370.5 90.5,372.3 91.5,370.6 92.5,372.6 93.5,371.4 94.5,368.4 95.5,368.9 96.5,369.9 97.5,369.5 98.5,368.8 99.5,369.3 100.5,369.9 101.5,367.9 102.5,368.9 103.5,368.1 104.5,369.9 105.5,370.3 106.5,368.7 107.5,370.8 108.5,371.0 109.5,371.0 110.5,368.9 111.5,367.8 112.5,368.1 113.5,369.1 114.5,370.1 115.5,368.9 116.5,367.5 117.5,367.9 118.5,366.4 119.5,367.1 120.5,366.4 121.5,366.4 122.5,367.8 123.5,369.4 124.5,369.9 125.5,366.5 126.5,366.3 127.5,368.2 128.5,367.9 129.5,367.3 130.5,368.8 131.5,366.7 132.5,369.4 133.5,370.2 134.5,366.5 135.5,366.3 136.5,369.6 137.5,368.0 138.5,369.0 139.5,367.7 140.5,369.9 141.5,366.9 142.5,369.9 143.5,369.8 144.5,367.6 145.5,366.9 146.5,367.7 147.5,368.3 148.5,366.7 149.5,367.1 150.5,368.8 151.5,368.9 152.5,368.8 153.5,365.3 154.5,365.7 155.5,369.0 156.5,368.4 157.5,367.4 158.5,367.4 159.5,365.2 160.5,369.1 161.5,367.5 162.5,366.1 163.5,368.8 164.5,369.2 165.5,364.9 166.5,368.7 167.5,367.4 168.5,364.9 169.5,368.0 170.5,368.2 171.5,368.2 172.5,367.7 173.5,366.3 174.5,368.4 175.5,366.1 176.5,366.6 177.5,367.8 178.5,366.8 179.5,366.0 180.5,364.7 181.5,367.8 182.5,368.9 183.5,367.3 184.5,367.8 185.5,367.5 186.5,364.5 187.5,366.9 188.5,366.6 189.5,368.3 190.5,367.5 191.5,364.7 192.5,367.2 193.5,366.3 194.5,366.8 195.5,366.0 196.5,367.2 197.5,364.3 198.5,364.3 199.5,368.5 200.5,364.2 201.5,365.7 202.5,367.7 203.5,367.1 204.5,366.6 205.5,366.2 206.5,367.7 207.5,366.1 208.5,366.7 209.5,365.6 210.5,367.8 211.5,368.2 212.5,368.6 213.5,364.2 214.5,365.4 215.5,368.4 216.5,366.9 217.5,367.4 218.5,364.4 219.5,366.1 220.5,366.6 221.5,365.6 222.5,366.5 223.5,365.2 224.5,366.3 225.5,366.2 226.5,364.7 227.5,365.8 228.5,366.0 229.5,368.2 230.5,366.5 231.5,365.8 232.5,364.2 233.5,367.0 234.5,368.2 235.5,368.0 236.5,365.1 237.5,366.6 238.5,365.0 239.5,366.0 240.5,363.7 241.5,366.2 242.5,366.0 243.5,367.7 244.5,366.2 245.5,367.6 246.5,364.8 247.5,366.2 248.5,366.5 249.5,366.7 250.5,366.2 251.5,365.5 252.5,366.8 253.5,365.5 254.5,365.5 255.5,367.2 256.5,363.7 257.5,365.4 258.5,366.7 259.5,365.2 260.5,365.7 261.5,364.2 262.5,367.6 263.5,367.5 264.5,363.5 265.5,367.7 266.5,365.4 267.5,365.4 268.5,366.1 269.5,363.6 270.5,363.7 271.5,364.9 272.5,363.8 273.5,363.7 274.5,367.7 275.5,365.2 276.5,365.7 277.5,367.2 278.5,367.4 279.5,367.5 280.5,364.0 281.5,365.6 282.5,363.7 283.5,364.1 284.5,367.1 285.5,364.3 286.5,367.6 287.5,363.2 288.5,367.5 289.5,367.7 290.5,364.1 291.5,365.0 292.5,366.1 293.5,367.1 294.5,366.4 295.5,365.2 296.5,363.2 297.5,366.7 298.5,365.0 299.5,363.6 300.5,366.1 301.5,365.2 302.5,364.5 303.5,364.9 304.5,365.7 305.5,366.4 306.5,363.8 307.5,365.3 308.5,363.5 309.5,365.3 310.5,366.1 311.5,366.9 312.5,366.7 313.5,363.1 314.5,365.0 315.5,366.1 316.5,365.4 317.5,366.6 318.5,365.8 319.5,365.3 320.5,366.6 321.5,363.5 322.5,364.0 323.5,366.5 324.5,362.9 325.5,365.9 326.5,365.7 327.5,363.1 328.5,363.9 329.5,363.4 330.5,366.4 331.5,366.7 332.5,363.3 333.5,363.7 334.5,366.9 335.5,363.5 336.5,365.8 337.5,362.9 338.5,363.3 339.5,366.6 340.5,362.7 341.5,365.2 342.5,363.8 343.5,364.3 344.5,362.2 345.5,363.6 346.5,363.2 347.5,366.6 348.5,362.7 349.5,365.6 350.5,364.4 351.5,362.1 352.5,365.2 353.5,363.7 354.5,365.4 355.5,364.7 356.5,365.4 357.5,362.5 358.5,364.0 359.5,364.4 360.5,363.0 361.5,365.3 362.5,364.6 363.5,363.5 364.5,362.4 365.5,365.3 366.5,362.4 367.5,365.7 368.5,365.5 369.5,361.8 370.5,361.8 371.5,361.8 372.5,361.4 373.5,363.6 374.5,363.0 375.5,361.8 376.5,361.8 377.5,363.6 378.5,364.4 379.5,362.7 380.5,363.8 381.5,363.8 382.5,363.7 383.5,361.8 384.5,361.6 385.5,364.7 386.5,364.0 387.5,363.1 388.5,364.8 389.5,362.5 390.5,362.6 391.5,361.2 392.5,360.6 393.5,360.3 394.5,364.1 395.5,363.2 396.5,359.8 397.5,360.5 398.5,363.5 399.5,363.2 400.5,363.3 401.5,363.0 402.5,361.3 403.5,360.8 404.5,362.5 405.5,358.7 406.5,359.8 407.5,359.0 408.5,359.8 409.5,361.8 410.5,358.9 411.5,361.3 412.5,361.9 413.5,359.7 414.5,358.4 415.5,362.4 416.5,361.1 417.5,360.0 418.5,359.8 419.5,360.4 420.5,360.8 421.5,361.5 422.5,358.7 423.5,362.2 424.5,360.5 425.5,358.7 426.5,358.5 427.5,359.6 428.5,361.4 429.5,360.4 430.5,357.4 431.5,361.2 432.5,360.9 433.5,361.1 434.5,357.4 435.5,357.3 436.5,358.8 437.5,357.1 438.5,358.8 439.5,357.6 440.5,358.1 441.5,357.1 442.5,359.7 443.5,358.8 444.5,360.6 445.5,360.6 446.5,360.9 447.5,358.0 448.5,359.9 449.5,358.2" fill="none" stroke="#f8f020" stroke-width="1.7" stroke-linejoin="round"/></g>
<rect x="46" y="299" width="2" height="137" fill="#000"/><rect x="466" y="299" width="2" height="137" fill="#000"/><rect x="47" y="299" width="420" height="2" fill="#000"/><rect x="46" y="435" width="422" height="1" fill="#000"/><rect x="466" y="301" width="4" height="1" fill="#3a0880"/><rect x="466" y="308" width="2" height="1" fill="#3a0880"/><rect x="466" y="315" width="2" height="1" fill="#3a0880"/><rect x="466" y="321" width="2" height="1" fill="#3a0880"/><rect x="466" y="328" width="4" height="1" fill="#3a0880"/><rect x="466" y="334" width="2" height="1" fill="#3a0880"/><rect x="466" y="341" width="2" height="1" fill="#3a0880"/><rect x="466" y="348" width="2" height="1" fill="#3a0880"/><rect x="466" y="354" width="4" height="1" fill="#3a0880"/><rect x="466" y="361" width="2" height="1" fill="#3a0880"/><rect x="466" y="368" width="2" height="1" fill="#3a0880"/><rect x="466" y="374" width="2" height="1" fill="#3a0880"/><rect x="466" y="381" width="4" height="1" fill="#3a0880"/><rect x="466" y="388" width="2" height="1" fill="#3a0880"/><rect x="466" y="394" width="2" height="1" fill="#3a0880"/><rect x="466" y="401" width="2" height="1" fill="#3a0880"/><rect x="466" y="408" width="4" height="1" fill="#3a0880"/><rect x="466" y="414" width="2" height="1" fill="#3a0880"/><rect x="466" y="421" width="2" height="1" fill="#3a0880"/><rect x="466" y="428" width="2" height="1" fill="#3a0880"/><rect x="466" y="434" width="4" height="1" fill="#3a0880"/><rect x="45" y="301" width="3" height="1" fill="#3a0880"/><rect x="45" y="328" width="3" height="1" fill="#3a0880"/><rect x="45" y="354" width="3" height="1" fill="#3a0880"/><rect x="45" y="381" width="3" height="1" fill="#3a0880"/><rect x="45" y="408" width="3" height="1" fill="#3a0880"/><rect x="45" y="434" width="3" height="1" fill="#3a0880"/><rect x="57" y="435" width="1" height="1" fill="#3a0880"/><rect x="66" y="435" width="1" height="1" fill="#3a0880"/><rect x="75" y="435" width="1" height="1" fill="#3a0880"/><rect x="84" y="435" width="1" height="1" fill="#3a0880"/><rect x="94" y="435" width="1" height="1" fill="#3a0880"/><rect x="103" y="435" width="1" height="1" fill="#3a0880"/><rect x="112" y="435" width="1" height="1" fill="#3a0880"/><rect x="122" y="435" width="1" height="1" fill="#3a0880"/><rect x="131" y="435" width="1" height="1" fill="#3a0880"/><rect x="140" y="435" width="1" height="1" fill="#3a0880"/><rect x="150" y="435" width="1" height="1" fill="#3a0880"/><rect x="159" y="435" width="1" height="1" fill="#3a0880"/><rect x="168" y="435" width="1" height="1" fill="#3a0880"/><rect x="177" y="435" width="1" height="1" fill="#3a0880"/><rect x="187" y="435" width="1" height="1" fill="#3a0880"/><rect x="196" y="435" width="1" height="1" fill="#3a0880"/><rect x="205" y="435" width="1" height="1" fill="#3a0880"/><rect x="215" y="435" width="1" height="1" fill="#3a0880"/><rect x="224" y="435" width="1" height="1" fill="#3a0880"/><rect x="233" y="435" width="1" height="1" fill="#3a0880"/><rect x="243" y="435" width="1" height="1" fill="#3a0880"/><rect x="252" y="435" width="1" height="1" fill="#3a0880"/><rect x="261" y="435" width="1" height="1" fill="#3a0880"/><rect x="270" y="435" width="1" height="1" fill="#3a0880"/><rect x="280" y="435" width="1" height="1" fill="#3a0880"/><rect x="289" y="435" width="1" height="1" fill="#3a0880"/><rect x="298" y="435" width="1" height="1" fill="#3a0880"/><rect x="308" y="435" width="1" height="1" fill="#3a0880"/><rect x="317" y="435" width="1" height="1" fill="#3a0880"/><rect x="326" y="435" width="1" height="1" fill="#3a0880"/><rect x="336" y="435" width="1" height="1" fill="#3a0880"/><rect x="345" y="435" width="1" height="1" fill="#3a0880"/><rect x="354" y="435" width="1" height="1" fill="#3a0880"/><rect x="363" y="435" width="1" height="1" fill="#3a0880"/><rect x="373" y="435" width="1" height="1" fill="#3a0880"/><rect x="382" y="435" width="1" height="1" fill="#3a0880"/><rect x="391" y="435" width="1" height="1" fill="#3a0880"/><rect x="401" y="435" width="1" height="1" fill="#3a0880"/><rect x="410" y="435" width="1" height="1" fill="#3a0880"/><rect x="419" y="435" width="1" height="1" fill="#3a0880"/><rect x="429" y="435" width="1" height="1" fill="#3a0880"/><rect x="438" y="435" width="1" height="1" fill="#3a0880"/><rect x="447" y="435" width="1" height="1" fill="#3a0880"/><rect x="456" y="435" width="1" height="1" fill="#3a0880"/>
</svg>
<div class="t" style="left:29.57px;top:132px;font-size:11px;color:#000;">50</div>
<div class="t" style="left:29.57px;top:159px;font-size:11px;color:#000;">40</div>
<div class="t" style="left:29.57px;top:185px;font-size:11px;color:#000;">30</div>
<div class="t" style="left:29.57px;top:212px;font-size:11px;color:#000;">20</div>
<div class="t" style="left:29.57px;top:239px;font-size:11px;color:#000;">10</div>
<div class="t" style="left:470.80px;top:132px;font-size:11px;color:#000;">20</div>
<div class="t" style="left:29.57px;top:294px;font-size:11px;color:#000;">20</div>
<div class="t" style="left:470.80px;top:294px;font-size:11px;color:#000;">20</div>
<div class="t" style="left:470.80px;top:159px;font-size:11px;color:#000;">16</div>
<div class="t" style="left:29.57px;top:321px;font-size:11px;color:#000;">16</div>
<div class="t" style="left:470.80px;top:321px;font-size:11px;color:#000;">16</div>
<div class="t" style="left:470.80px;top:185px;font-size:11px;color:#000;">12</div>
<div class="t" style="left:29.57px;top:347px;font-size:11px;color:#000;">12</div>
<div class="t" style="left:470.80px;top:347px;font-size:11px;color:#000;">12</div>
<div class="t" style="left:470.80px;top:212px;font-size:11px;color:#000;">8</div>
<div class="t" style="left:35.68px;top:374px;font-size:11px;color:#000;">8</div>
<div class="t" style="left:470.80px;top:374px;font-size:11px;color:#000;">8</div>
<div class="t" style="left:470.80px;top:239px;font-size:11px;color:#000;">4</div>
<div class="t" style="left:35.68px;top:401px;font-size:11px;color:#000;">4</div>
<div class="t" style="left:470.80px;top:401px;font-size:11px;color:#000;">4</div>
<div class="t" style="left:42.00px;top:276px;font-size:11px;color:#000;letter-spacing:0.036px;">0.0</div>
<div class="t" style="left:42.00px;top:438px;font-size:11px;color:#000;letter-spacing:0.036px;">0.0</div>
<div class="t" style="left:88.50px;top:276px;font-size:11px;color:#000;letter-spacing:0.036px;">0.5</div>
<div class="t" style="left:88.50px;top:438px;font-size:11px;color:#000;letter-spacing:0.036px;">0.5</div>
<div class="t" style="left:135.00px;top:276px;font-size:11px;color:#000;letter-spacing:0.036px;">1.0</div>
<div class="t" style="left:135.00px;top:438px;font-size:11px;color:#000;letter-spacing:0.036px;">1.0</div>
<div class="t" style="left:181.50px;top:276px;font-size:11px;color:#000;letter-spacing:0.036px;">1.5</div>
<div class="t" style="left:181.50px;top:438px;font-size:11px;color:#000;letter-spacing:0.036px;">1.5</div>
<div class="t" style="left:228.00px;top:276px;font-size:11px;color:#000;letter-spacing:0.036px;">2.0</div>
<div class="t" style="left:228.00px;top:438px;font-size:11px;color:#000;letter-spacing:0.036px;">2.0</div>
<div class="t" style="left:274.50px;top:276px;font-size:11px;color:#000;letter-spacing:0.036px;">2.5</div>
<div class="t" style="left:274.50px;top:438px;font-size:11px;color:#000;letter-spacing:0.036px;">2.5</div>
<div class="t" style="left:321.00px;top:276px;font-size:11px;color:#000;letter-spacing:0.036px;">3.0</div>
<div class="t" style="left:321.00px;top:438px;font-size:11px;color:#000;letter-spacing:0.036px;">3.0</div>
<div class="t" style="left:367.50px;top:276px;font-size:11px;color:#000;letter-spacing:0.036px;">3.5</div>
<div class="t" style="left:367.50px;top:438px;font-size:11px;color:#000;letter-spacing:0.036px;">3.5</div>
<div class="t" style="left:414.00px;top:276px;font-size:11px;color:#000;letter-spacing:0.036px;">4.0</div>
<div class="t" style="left:414.00px;top:438px;font-size:11px;color:#000;letter-spacing:0.036px;">4.0</div>
<div class="t" style="left:460.50px;top:276px;font-size:11px;color:#000;letter-spacing:0.036px;">4.5</div>
<div class="t" style="left:460.50px;top:438px;font-size:11px;color:#000;letter-spacing:0.036px;">4.5</div>
<div class="gb" style="left:491px;top:133px;width:140px;height:83px;"></div>
<div class="abs" style="left:498px;top:132px;width:45px;height:3px;background:#f8f7f3;"></div>
<div class="t" style="left:499.50px;top:127px;font-size:11px;color:#0046d5;letter-spacing:0.058px;">Disc info</div>
<div class="t" style="left:499.50px;top:141px;font-size:11px;color:#000;letter-spacing:-0.046px;">Typ:</div>
<div class="t" style="left:544.80px;top:141px;font-size:11px;color:#000080;letter-spacing:-0.078px;">DVD+R</div>
<div class="t" style="left:499.50px;top:159px;font-size:11px;color:#000;letter-spacing:-0.119px;">ID:</div>
<div class="t" style="left:544.80px;top:159px;font-size:11px;color:#000080;letter-spacing:-0.401px;">CMC MAG M01</div>
<div class="t" style="left:499.50px;top:177px;font-size:11px;color:#000;letter-spacing:-0.118px;">Data:</div>
<div class="t" style="left:544.80px;top:177px;font-size:11px;color:#000080;letter-spacing:-0.062px;">29 Sep 2007</div>
<div class="t" style="left:499.50px;top:195px;font-size:11px;color:#000;letter-spacing:-0.211px;">Label:</div>
<div class="t" style="left:544.80px;top:195px;font-size:11px;color:#000080;">-</div>
<div class="gb" style="left:491px;top:224px;width:140px;height:204px;"></div>
<div class="abs" style="left:498px;top:223px;width:42px;height:3px;background:#f8f7f3;"></div>
<div class="t" style="left:499.60px;top:218px;font-size:11px;color:#0046d5;letter-spacing:-0.068px;">Settings</div>
<div class="inp" style="left:500px;top:233px;width:84px;height:21px;"></div>
<div class="t" style="left:504.70px;top:238px;font-size:11px;color:#000;">8</div>
<div class="t" style="left:512.6px;top:238px;font-size:11px;transform-origin:0 0;transform:scaleX(1.12);">X</div>
<div class="abs" style="left:567px;top:235px;width:15px;height:17px;border-radius:2px;background:linear-gradient(180deg,#dce6fc,#b6ccf8 60%,#a4bcf2);border:1px solid #c0d0f8;box-sizing:border-box"></div>
<svg class="abs" style="left:570px;top:240.5px" width="9" height="7" viewBox="0 0 9 7"><path d="M1 1.2L4.5 4.8L8 1.2" stroke="#4d6185" stroke-width="2" fill="none"/></svg>
<div class="abs" style="left:592px;top:232px;width:23px;height:23px;background:#ece9d8;border:1px solid #fff;border-right-color:#55534a;border-bottom-color:#55534a;box-shadow:inset -1px -1px 0 #a09d8c, inset 1px 1px 0 #f6f4ea;box-sizing:border-box"></div>
<svg class="abs" style="left:596px;top:235px" width="14" height="16" viewBox="0 0 14 16"><rect x="0.6" y="0.6" width="12.8" height="14.8" fill="#fff" stroke="#000" stroke-width="1.2"/><path d="M3.6 7.8V6.3M3.6 5.6V4.6H7.4" stroke="#088408" stroke-width="1.5" fill="none"/><path d="M6.9 2L9.6 4.6L6.9 7.2Z" fill="#088408"/><path d="M10.5 7.8V10.9H7" stroke="#088408" stroke-width="1.5" fill="none"/><path d="M7.6 8.3L4.9 10.9L7.6 13.5Z" fill="#088408"/></svg>
<div class="t" style="left:501.70px;top:264px;font-size:11px;color:#000;letter-spacing:-0.148px;">Start:</div>
<div class="inp" style="left:554px;top:259px;width:60px;height:20px;"></div>
<div class="t" style="left:556.70px;top:262px;font-size:11px;color:#000;letter-spacing:-0.118px;">0000 MB</div>
<div class="t" style="left:501.70px;top:288px;font-size:11px;color:#000;letter-spacing:-0.107px;">End:</div>
<div class="inp" style="left:554px;top:282px;width:60px;height:20px;"></div>
<div class="t" style="left:556.70px;top:285px;font-size:11px;color:#000;letter-spacing:-0.118px;">4447 MB</div>
<div class="cb" style="left:502px;top:304px;border-color:#1c5180;"></div>
<div class="t" style="left:518.00px;top:304px;font-size:11px;color:#000;letter-spacing:-0.021px;">Quick scan</div>
<div class="cb" style="left:502px;top:322px;border-color:#1c5180;"><svg width="9" height="9" viewBox="0 0 9 9"><path d="M1.2 3.8L3.5 6.2L7.8 1.8" stroke="#21a121" stroke-width="2" fill="none"/></svg></div>
<div class="t" style="left:518.00px;top:323px;font-size:11px;color:#000;letter-spacing:-0.065px;">Show C1/PIE</div>
<div class="cb" style="left:502px;top:338px;border-color:#1c5180;"><svg width="9" height="9" viewBox="0 0 9 9"><path d="M1.2 3.8L3.5 6.2L7.8 1.8" stroke="#21a121" stroke-width="2" fill="none"/></svg></div>
<div class="t" style="left:518.00px;top:338px;font-size:11px;color:#000;letter-spacing:-0.055px;">Show C2/PIF</div>
<div class="cb" style="left:502px;top:353px;border-color:#1c5180;"><svg width="9" height="9" viewBox="0 0 9 9"><path d="M1.2 3.8L3.5 6.2L7.8 1.8" stroke="#21a121" stroke-width="2" fill="none"/></svg></div>
<div class="t" style="left:518.00px;top:354px;font-size:11px;color:#000;letter-spacing:-0.150px;">Show jitter</div>
<div class="cb" style="left:502px;top:369px;border-color:#1c5180;"><svg width="9" height="9" viewBox="0 0 9 9"><path d="M1.2 3.8L3.5 6.2L7.8 1.8" stroke="#21a121" stroke-width="2" fill="none"/></svg></div>
<div class="t" style="left:518.00px;top:369px;font-size:11px;color:#000;letter-spacing:-0.121px;">Show read speed</div>
<div class="cb" style="left:502px;top:385px;border-color:#cac8bb;background:#fff;"><svg width="9" height="9" viewBox="0 0 9 9"><path d="M1.2 3.8L3.5 6.2L7.8 1.8" stroke="#cac8bb" stroke-width="2" fill="none"/></svg></div>
<div class="t" style="left:518.00px;top:385px;font-size:11px;color:#aca899;letter-spacing:-0.145px;">Show write speed</div>
<div class="btn" style="left:528px;top:402px;width:96px;height:21px;"></div>
<div class="t" style="left:550.10px;top:406px;font-size:11px;color:#000;letter-spacing:0.247px;">Advanced</div>
<div class="gb" style="left:491px;top:434px;width:140px;height:26px;"></div>
<div class="t" style="left:501.70px;top:441px;font-size:11px;color:#000;letter-spacing:-0.253px;">Quality score:</div>
<div class="t" style="left:609.07px;top:441px;font-size:11px;color:#000080;">94</div>
<div class="gb" style="left:491px;top:466px;width:140px;height:56px;"></div>
<div class="t" style="left:501.70px;top:475px;font-size:11px;color:#000;letter-spacing:-0.157px;">Postęp:</div>
<div class="t" style="left:592.28px;top:475px;font-size:11px;color:#000080;letter-spacing:0.083px;">100</div>
<div class="t" style="left:613.60px;top:475px;font-size:11px;color:#000080;transform-origin:0 0;transform:scaleX(0.8);">%</div>
<div class="t" style="left:501.70px;top:491px;font-size:11px;color:#000;letter-spacing:-0.143px;">Miejsce:</div>
<div class="t" style="left:578.25px;top:491px;font-size:11px;color:#000080;letter-spacing:-0.046px;">4446 MB</div>
<div class="t" style="left:501.70px;top:506px;font-size:11px;color:#000;letter-spacing:-0.021px;">Prędk.:</div>
<div class="t" style="left:589.62px;top:506px;font-size:11px;color:#000080;letter-spacing:0.323px;">8.32</div>
<div class="t" style="left:613.9px;top:506px;font-size:11px;color:#000080;transform-origin:0 0;transform:scaleX(1.12);">X</div>
<div class="abs" style="left:15px;top:466px;width:146px;height:57px;border:1px solid #fff;"></div>
<div class="abs" style="left:14px;top:465px;width:146px;height:57px;border:1px solid #aba796;"></div>
<div class="abs" style="left:22px;top:465px;width:55px;height:2px;background:#f6f5f0;"></div>
<div class="abs" style="left:24px;top:462px;width:8px;height:8px;border:1px solid #000;background:#00ff00;"></div>
<div class="t" style="left:34.90px;top:460px;font-size:11px;color:#000;letter-spacing:-0.266px;">PI Errors</div>
<div class="abs" style="left:173px;top:466px;width:146px;height:57px;border:1px solid #fff;"></div>
<div class="abs" style="left:172px;top:465px;width:146px;height:57px;border:1px solid #aba796;"></div>
<div class="abs" style="left:180px;top:465px;width:64px;height:2px;background:#f6f5f0;"></div>
<div class="abs" style="left:182px;top:462px;width:8px;height:8px;border:1px solid #000;background:#ff0000;"></div>
<div class="t" style="left:193.30px;top:460px;font-size:11px;color:#000;letter-spacing:-0.306px;">PI Failures</div>
<div class="abs" style="left:332px;top:466px;width:147px;height:43px;border:1px solid #fff;"></div>
<div class="abs" style="left:331px;top:465px;width:147px;height:43px;border:1px solid #aba796;"></div>
<div class="abs" style="left:339px;top:465px;width:36px;height:2px;background:#f6f5f0;"></div>
<div class="abs" style="left:341px;top:462px;width:8px;height:8px;border:1px solid #000;background:#ffff00;"></div>
<div class="t" style="left:351.30px;top:460px;font-size:11px;color:#000;letter-spacing:-0.073px;">Jitter</div>
<div class="t" style="left:21.90px;top:476px;font-size:11px;color:#000;letter-spacing:-0.221px;">Średnio:</div>
<div class="t" style="left:128.95px;top:476px;font-size:11px;color:#000080;letter-spacing:0.248px;">5.53</div>
<div class="t" style="left:21.90px;top:491px;font-size:11px;color:#000;letter-spacing:-0.336px;">Maksimum:</div>
<div class="t" style="left:138.43px;top:491px;font-size:11px;color:#000080;letter-spacing:0.433px;">27</div>
<div class="t" style="left:21.90px;top:506px;font-size:11px;color:#000;letter-spacing:0.003px;">Całość:</div>
<div class="t" style="left:120.22px;top:506px;font-size:11px;color:#000080;letter-spacing:0.073px;">98379</div>
<div class="t" style="left:180.80px;top:476px;font-size:11px;color:#000;letter-spacing:-0.221px;">Średnio:</div>
<div class="t" style="left:287.55px;top:476px;font-size:11px;color:#000080;letter-spacing:0.248px;">0.01</div>
<div class="t" style="left:180.80px;top:491px;font-size:11px;color:#000;letter-spacing:-0.336px;">Maksimum:</div>
<div class="t" style="left:297.44px;top:491px;font-size:11px;color:#000080;letter-spacing:0.841px;">11</div>
<div class="t" style="left:180.80px;top:506px;font-size:11px;color:#000;letter-spacing:0.003px;">Całość:</div>
<div class="t" style="left:284.83px;top:506px;font-size:11px;color:#000080;letter-spacing:0.133px;">1606</div>
<div class="t" style="left:340.30px;top:476px;font-size:11px;color:#000;letter-spacing:-0.221px;">Średnio:</div>
<div class="t" style="left:429.97px;top:476px;font-size:11px;color:#000080;letter-spacing:-0.025px;">10.05</div>
<div class="t" style="left:460.90px;top:476px;font-size:11px;color:#000080;transform-origin:0 0;transform:scaleX(0.8);">%</div>
<div class="t" style="left:340.30px;top:491px;font-size:11px;color:#000;letter-spacing:-0.336px;">Maksimum:</div>
<div class="t" style="left:435.23px;top:491px;font-size:11px;color:#000080;letter-spacing:0.227px;">11.6</div>
<div class="t" style="left:460.00px;top:491px;font-size:11px;color:#000080;transform-origin:0 0;transform:scaleX(0.8);">%</div>
<div class="t" style="left:340.30px;top:510px;font-size:11px;color:#000;letter-spacing:-0.314px;">PO failures:</div>
<div class="t" style="left:462.88px;top:510px;font-size:11px;color:#000080;">0</div>
</div>
</body></html>
